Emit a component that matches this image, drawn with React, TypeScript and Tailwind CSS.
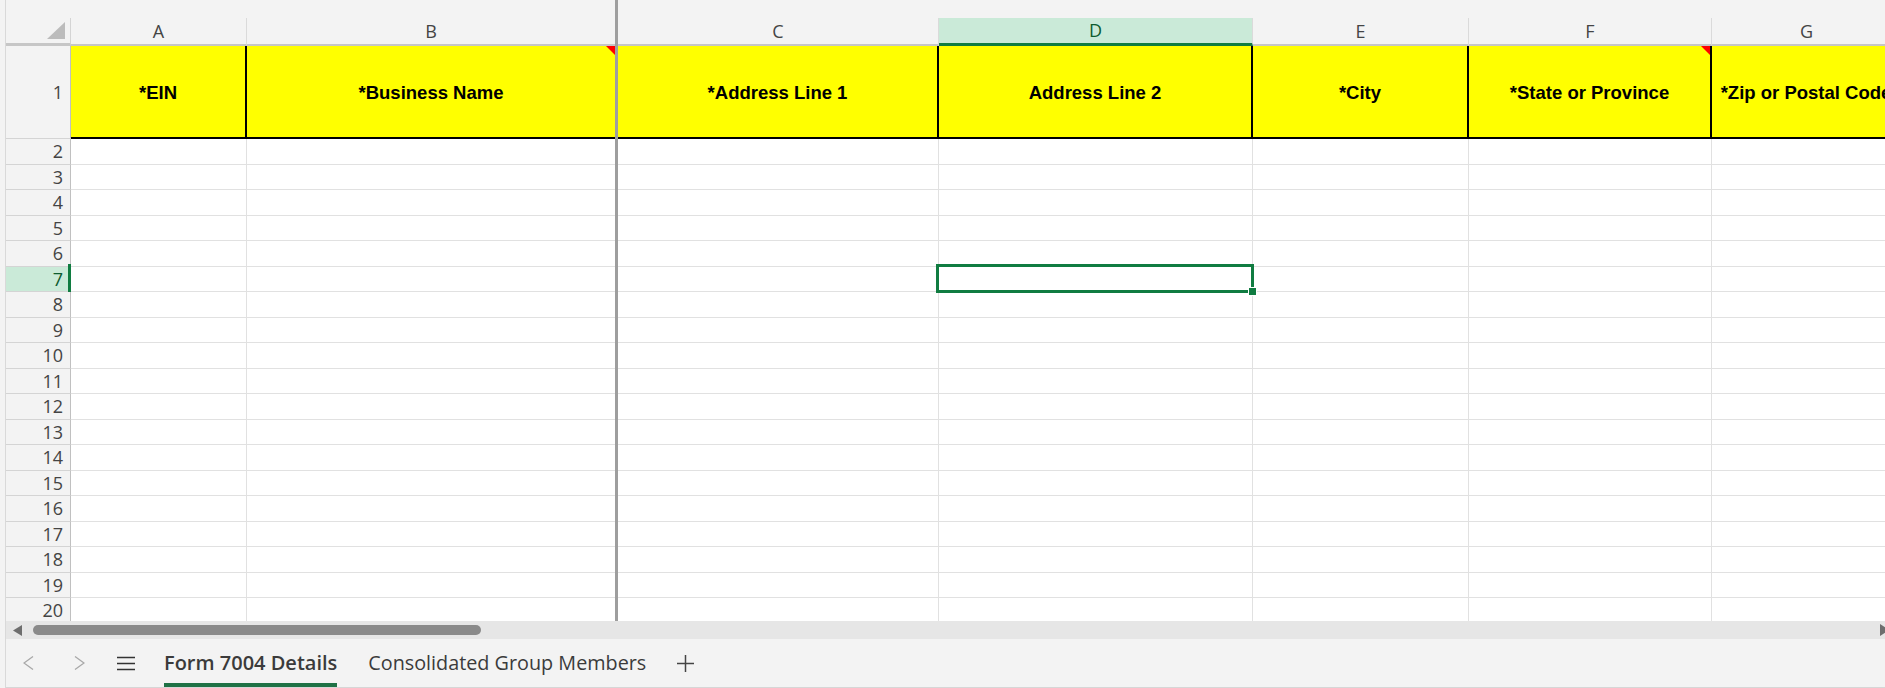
import { Fragment } from 'react'

type Col = { key: string; width: string; title: string; note?: boolean }

const COLUMNS: Col[] = [
  { key: 'A', width: 'w-[176px]', title: '*EIN' },
  { key: 'B', width: 'w-[368px]', title: '*Business Name', note: true },
  { key: 'C', width: 'w-[321px]', title: '*Address Line 1' },
  { key: 'D', width: 'w-[314px]', title: 'Address Line 2' },
  { key: 'E', width: 'w-[216px]', title: '*City' },
  { key: 'F', width: 'w-[243px]', title: '*State or Province', note: true },
  { key: 'G', width: 'w-[190px]', title: '*Zip or Postal Code' },
]

// frozen panes split after column B
const FROZEN_AFTER = 'B'
const ACTIVE_COL = 'D'
const ACTIVE_ROW = 7

const ROWS = Array.from({ length: 19 }, (_, i) => i + 2)

function FreezeBar() {
  return <div className="w-[3px] shrink-0 self-stretch bg-[#9e9e9e]" />
}

function ColumnHeaders() {
  return (
    <div className="flex h-[28px]">
      <div className="flex w-[65px] shrink-0 items-end justify-end border-r border-b-[3px] border-r-[#d4d4d4] border-b-[#c6c6c6] pr-[5px] pb-[4px]">
        <div className="h-[17px] w-[18px] bg-[#bcbcbc] [clip-path:polygon(100%_0,100%_100%,0_100%)]" />
      </div>
      {COLUMNS.map((c) => (
        <Fragment key={c.key}>
          {c.key === ACTIVE_COL ? (
            <div
              className={`${c.width} flex shrink-0 items-center justify-center border-r border-b-[3px] border-r-[#dadada] border-b-[#107c41] bg-[#caead8] text-[18px] text-[#0e5c2f]`}
            >
              {c.key}
            </div>
          ) : (
            <div
              className={`${c.width} flex shrink-0 items-center justify-center border-b-2 border-b-[#c6c6c6] text-[18px] ${
                c.key === FROZEN_AFTER ? '' : 'border-r border-r-[#dadada]'
              }`}
            >
              {c.key}
            </div>
          )}
          {c.key === FROZEN_AFTER && <FreezeBar />}
        </Fragment>
      ))}
    </div>
  )
}

function TitleRow() {
  return (
    <div className="flex h-[93px]">
      <div className="flex w-[65px] shrink-0 items-center justify-end border-r border-b border-r-[#c0c0c0] border-b-[#d4d4d4] pr-[7px] text-[18px]">
        1
      </div>
      {COLUMNS.map((c) => (
        <Fragment key={c.key}>
          <div
            className={`${c.width} relative flex shrink-0 items-center justify-center overflow-hidden whitespace-nowrap border-b-2 border-b-black bg-[#ffff00] pt-[2px] font-['Liberation_Sans',Arial,sans-serif] text-[18.5px] font-bold text-black ${
              c.key === FROZEN_AFTER ? '' : 'border-r-2 border-r-black'
            }`}
          >
            {c.title}
            {c.note && (
              <div className="absolute top-0 right-0 h-0 w-0 border-t-[9px] border-l-[9px] border-t-[#ff0000] border-l-transparent" />
            )}
          </div>
          {c.key === FROZEN_AFTER && <FreezeBar />}
        </Fragment>
      ))}
    </div>
  )
}

function GridRow({ n }: { n: number }) {
  const active = n === ACTIVE_ROW
  const height = n % 2 === 0 ? 'h-[26px]' : 'h-[25px]'

  return (
    <div className={`flex ${height}`}>
      <div
        className={`relative flex w-[65px] shrink-0 items-center justify-end border-r border-b border-r-[#c0c0c0] border-b-[#d4d4d4] pr-[7px] text-[18px] ${
          active ? 'bg-[#caead8] text-[#0e5c2f]' : ''
        }`}
      >
        {n}
        {active && <div className="absolute top-[-3px] right-[-1px] bottom-[-1px] w-[3px] bg-[#107c41]" />}
      </div>
      {COLUMNS.map((c) => (
        <Fragment key={c.key}>
          <div
            className={`${c.width} relative shrink-0 border-b border-b-[#e1e1e1] bg-white ${
              c.key === FROZEN_AFTER ? '' : 'border-r border-r-[#e1e1e1]'
            }`}
          >
            {active && c.key === ACTIVE_COL && (
              <div className="pointer-events-none absolute top-[-3px] right-[-2px] bottom-[-2px] left-[-3px] z-10 border-[3px] border-[#107c41]">
                <div className="absolute right-[-6px] bottom-[-6px] h-[9px] w-[9px] border border-white bg-[#107c41]" />
              </div>
            )}
          </div>
          {c.key === FROZEN_AFTER && <FreezeBar />}
        </Fragment>
      ))}
    </div>
  )
}

function HScrollbar() {
  return (
    <div className="flex h-[18px] shrink-0 items-center overflow-hidden bg-[#e6e6e6]">
      <svg className="ml-[7px] shrink-0" width="9" height="11" viewBox="0 0 9 11">
        <polygon points="9,0 9,11 0,5.5" fill="#6e6e6e" />
      </svg>
      <div className="ml-[11px] h-[10px] w-[448px] shrink-0 rounded-full bg-[#8a8a8a]" />
      <div className="flex-1" />
      <svg className="-mr-[4px] shrink-0" width="9" height="12" viewBox="0 0 9 12">
        <polygon points="0,0 0,12 9,6" fill="#6e6e6e" />
      </svg>
    </div>
  )
}

function SheetTabs() {
  return (
    <div className="flex h-[49px] shrink-0 items-stretch border-b border-[#d6d6d6] text-[20px] text-[#3b3b3b]">
      <div className="ml-[17px] flex items-center">
        <svg width="11" height="14" viewBox="0 0 11 14">
          <polyline points="10,0.5 1,7 10,13.5" fill="none" stroke="#a8a8a8" strokeWidth="1.3" />
        </svg>
      </div>
      <div className="ml-[40px] flex items-center">
        <svg width="11" height="14" viewBox="0 0 11 14">
          <polyline points="1,0.5 10,7 1,13.5" fill="none" stroke="#a8a8a8" strokeWidth="1.3" />
        </svg>
      </div>
      <div className="ml-[32px] flex items-center">
        <svg width="18" height="15" viewBox="0 0 18 15">
          <path d="M0 1.5h18M0 7.5h18M0 13.5h18" stroke="#333" strokeWidth="1.6" />
        </svg>
      </div>
      <div className="ml-[29px] flex items-center border-b-4 border-[#1e7145] pt-[4px] font-semibold">
        Form 7004 Details
      </div>
      <div className="ml-[31px] flex items-center text-[19.8px]">Consolidated Group Members</div>
      <div className="ml-[31px] flex items-center">
        <svg width="17" height="17" viewBox="0 0 17 17">
          <path d="M8.5 0v17M0 8.5h17" stroke="#444" strokeWidth="1.5" />
        </svg>
      </div>
    </div>
  )
}

export default function App() {
  return (
    <div className="h-[688px] w-[1885px] overflow-hidden bg-[#f3f3f3] pl-[5px] font-['Open_Sans',sans-serif] text-[#444]">
      <div className="flex h-full flex-col border-l border-[#d9d9d9]">
        <div className="h-[621px] shrink-0 overflow-hidden">
          <div className="flex h-[18px]">
            <div className="w-[609px] shrink-0" />
            <FreezeBar />
          </div>
          <ColumnHeaders />
          <TitleRow />
          {ROWS.map((n) => (
            <GridRow key={n} n={n} />
          ))}
        </div>
        <HScrollbar />
        <SheetTabs />
      </div>
    </div>
  )
}
